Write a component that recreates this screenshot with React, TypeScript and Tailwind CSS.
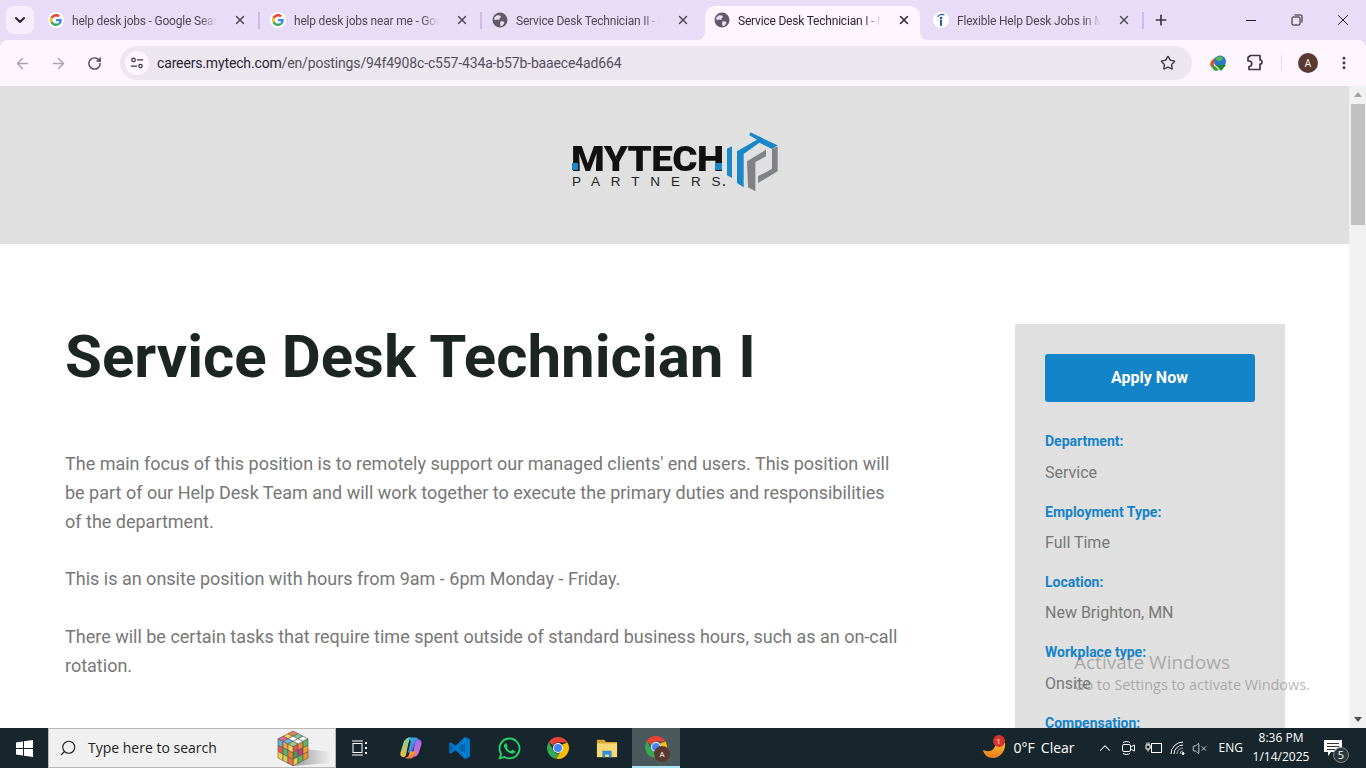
import { ArrowLeft, ArrowRight, RotateCw, Star, MoreVertical, ChevronDown, X, Plus, Search, ChevronUp, VolumeX } from 'lucide-react';
import { FaWhatsapp } from 'react-icons/fa';

const tabs = [
  { title: 'help desk jobs - Google Search', icon: 'google', box: 'w-[222px] pl-[11px] pr-[12px]', sep: true },
  { title: 'help desk jobs near me - Google', icon: 'google', box: 'w-[222px] pl-[11px] pr-[12px]', sep: true },
  { title: 'Service Desk Technician II - MyTech', icon: 'globe', box: 'w-[222px] pl-[11px] pr-[13px]' },
  { title: 'Service Desk Technician I - MyTech', icon: 'globe', box: 'w-[215px] ml-[2px] pl-[9px] pr-[9px]', active: true },
  { title: 'Flexible Help Desk Jobs in Minnesota', icon: 'indeed', box: 'w-[223px] pl-[13px] pr-[12px]', sep: true },
];

const details = [
  { label: 'Department:', value: 'Service' },
  { label: 'Employment Type:', value: 'Full Time' },
  { label: 'Location:', value: 'New Brighton, MN' },
  { label: 'Workplace type:', value: 'Onsite' },
  { label: 'Compensation:', value: '' },
];

function GoogleIcon() {
  return (
    <svg viewBox="0 0 48 48" className="w-4 h-4 shrink-0">
      <circle cx="24" cy="24" r="24" fill="#fff" />
      <g transform="translate(6 6) scale(0.75)">
        <path fill="#EA4335" d="M24 9.5c3.54 0 6.71 1.22 9.21 3.6l6.85-6.85C35.9 2.38 30.47 0 24 0 14.62 0 6.51 5.38 2.56 13.22l7.98 6.19C12.43 13.72 17.74 9.5 24 9.5z" />
        <path fill="#4285F4" d="M46.98 24.55c0-1.57-.15-3.09-.38-4.55H24v9.02h12.94c-.58 2.96-2.26 5.48-4.78 7.18l7.73 6c4.51-4.18 7.09-10.36 7.09-17.65z" />
        <path fill="#FBBC05" d="M10.53 28.59c-.48-1.45-.76-2.99-.76-4.59s.27-3.14.76-4.59l-7.98-6.19C.92 16.46 0 20.12 0 24c0 3.88.92 7.54 2.56 10.78l7.97-6.19z" />
        <path fill="#34A853" d="M24 48c6.48 0 11.93-2.13 15.89-5.81l-7.73-6c-2.15 1.45-4.92 2.3-8.16 2.3-6.26 0-11.57-4.22-13.47-9.91l-7.98 6.19C6.51 42.62 14.62 48 24 48z" />
      </g>
    </svg>
  );
}

function GlobeIcon() {
  return (
    <svg viewBox="0 0 16 16" className="w-4 h-4 shrink-0">
      <circle cx="8" cy="8" r="7.5" fill="#5f5a66" />
      <path fill="#e9dcf6" d="M2.200 5.500 5 3.200l3.200.2.8 1.600-1.600 1.400L7.500 8 5 7.600 2.600 8.200z" />
      <path fill="#e9dcf6" d="M8.500 9.200l3 .2 1 1.400-1.700 2.600-2.100.8-.6-2.200z" />
    </svg>
  );
}

function IndeedIcon() {
  return (
    <svg viewBox="0 0 16 16" className="w-4 h-4 shrink-0">
      <circle cx="8" cy="8" r="8" fill="#fff" />
      <path d="M4.500 5C6 2.800 9 2 11.500 3" fill="none" stroke="#2557a7" strokeWidth="1.200" />
      <circle cx="8" cy="6" r="1.300" fill="#2557a7" />
      <rect x="7" y="7.800" width="2" height="6" fill="#2557a7" />
    </svg>
  );
}

function ChromeIcon({ size = 24 }: { size?: number }) {
  return (
    <svg viewBox="0 0 48 48" width={size} height={size} className="shrink-0">
      <path fill="#EA4335" d="M24 2a22 22 0 0 1 19 11H24a11 11 0 0 0-10 6.500L5.600 12A22 22 0 0 1 24 2z" />
      <path fill="#34A853" d="M5.600 12 15 28.500A11 11 0 0 0 27 34.600L20.600 45.700A22 22 0 0 1 5.600 12z" />
      <path fill="#FBBC04" d="M43 13A22 22 0 0 1 20.600 45.700L30 29.500A11 11 0 0 0 32 17z" />
      <circle cx="24" cy="24" r="10" fill="#fff" />
      <circle cx="24" cy="24" r="8" fill="#4285F4" />
    </svg>
  );
}

function WindowsLogo() {
  return (
    <svg viewBox="0 0 17 17" className="w-[17px] h-[17px]">
      <path fill="#fff" d="M0 2.400 7 1.400V8H0zM8 1.300 17 0v8H8zM0 9h7v6.600l-7-1zM8 9h9v8l-9-1.300z" />
    </svg>
  );
}

function RubikCube() {
  const top = ['#e8805a', '#7fc8a0', '#fff', '#f5d04a', '#fff', '#fff', '#e86a8a', '#6fb0e8', '#9fd07a'];
  const left = ['#5fb0d8', '#f0a040', '#f5d04a', '#e85a4a', '#58b868', '#f08030', '#f5d04a', '#d8d04a', '#e87040'];
  const right = ['#e84a6a', '#f08a30', '#58b868', '#4a9a50', '#c83a7a', '#f0a030', '#e8d040', '#58b868', '#f09030'];
  const cells: React.ReactNode[] = [];
  for (let r = 0; r < 3; r++) {
    for (let c = 0; c < 3; c++) {
      const i = r * 3 + c;
      const tx = 16 + (c - r) * 5;
      const ty = 2 + (c + r) * 2.6;
      cells.push(<polygon key={'t' + i} fill={top[i]} stroke="#555" strokeWidth="0.6" points={`${tx},${ty} ${tx + 5},${ty + 2.6} ${tx},${ty + 5.2} ${tx - 5},${ty + 2.6}`} />);
      const lx = 1 + c * 5;
      const ly = 9.8 + c * 2.6 + r * 6.4;
      cells.push(<polygon key={'l' + i} fill={left[i]} stroke="#555" strokeWidth="0.6" points={`${lx},${ly} ${lx + 5},${ly + 2.6} ${lx + 5},${ly + 9} ${lx},${ly + 6.4}`} />);
      const rx = 16 + c * 5;
      const ry = 17.6 - c * 2.6 + r * 6.4;
      cells.push(<polygon key={'r' + i} fill={right[i]} stroke="#555" strokeWidth="0.6" points={`${rx},${ry} ${rx + 5},${ry - 2.6} ${rx + 5},${ry + 3.8} ${rx},${ry + 6.4}`} />);
    }
  }
  return (
    <svg viewBox="0 0 56 38" className="w-[56px] h-[38px]">
      <defs>
        <linearGradient id="cubeShadow" x1="0" x2="1" y1="0" y2="0">
          <stop offset="0" stopColor="#9a9a9a" />
          <stop offset="1" stopColor="#f0f0f0" />
        </linearGradient>
      </defs>
      <polygon points="28,20 54,23 54,34 16,37" fill="url(#cubeShadow)" />
      {cells}
    </svg>
  );
}

function MytechLogo() {
  return (
    <div className="relative w-[230px] h-[75px]">
      <div className="absolute left-[11px] top-[13px] text-[35px] leading-[44px] font-black text-[#111] tracking-[-0.5px] scale-x-[1.1] origin-left font-['Roboto',sans-serif]">MYTECH</div>
      <div className="absolute left-[12px] top-[38px] w-[6px] h-[7px] bg-[#1a87c9]" />
      <div className="absolute left-[155px] top-[38px] w-[7px] h-[7px] bg-[#1a87c9]" />
      <div className="absolute left-[12px] top-[49px] text-[13.5px] leading-[16px] text-[#222] tracking-[10.9px] font-['Liberation_Sans',sans-serif]">PARTNERS</div>
      <div className="absolute left-[163px] top-[59px] w-[2px] h-[2px] rounded-full bg-[#222]" />
      <svg viewBox="0 0 186 204" className="absolute left-[162px] top-[3px] w-[62px] h-[68px]">
        <polygon fill="#1a87c9" points="15,62 30,55 30,150 15,142" />
        <polygon fill="#1a87c9" points="45,70 65,60 65,178 45,165" />
        <polygon fill="#1a87c9" points="45,70 105,35 82,22 85,13 167,52 150,63 112,44 65,78" />
        <polygon fill="#808285" points="167,55 167,130 108,165 108,145 150,122 150,63" />
        <polygon fill="#808285" points="75,100 132,65 132,85 100,102 100,190 78,178" />
      </svg>
    </div>
  );
}

export default function App() {
  return (
    <div className="w-[1366px] h-[768px] overflow-hidden flex flex-col bg-[#e9dcf6] font-['Roboto',sans-serif]">
      {/* tab strip */}
      <div className="h-10 flex items-end shrink-0">
        <div className="w-[28px] h-[28px] ml-[6px] mb-[6px] mr-[3px] rounded-lg bg-[#f6eefc] flex items-center justify-center shrink-0">
          <ChevronDown size={16} strokeWidth={3} className="text-[#2a2530]" />
        </div>
        {tabs.map((tab) => (
          <div key={tab.title} className={`${tab.box} h-[34px] pb-[6px] relative flex items-center gap-2 shrink-0 rounded-t-[10px] ${tab.active ? 'bg-[#fdf5ff] text-[#2c2730]' : 'text-[#4d4855]'}`}>
            {tab.icon === 'google' && <GoogleIcon />}
            {tab.icon === 'globe' && <GlobeIcon />}
            {tab.icon === 'indeed' && <IndeedIcon />}
            <span className="flex-1 overflow-hidden whitespace-nowrap text-xs tracking-[-0.2px] pt-px [mask-image:linear-gradient(to_right,black_88%,transparent)]">{tab.title}</span>
            <X size={14} strokeWidth={2.5} className="ml-2 shrink-0" />
            {tab.sep && <div className="absolute right-[-1px] top-[6px] w-[2px] h-[17px] bg-[#cdb8f0]" />}
            {tab.active && (
              <>
                <div className="absolute left-[-8px] bottom-0 w-2 h-2 bg-[#fdf5ff]"><div className="w-2 h-2 rounded-br-lg bg-[#e9dcf6]" /></div>
                <div className="absolute right-[-8px] bottom-0 w-2 h-2 bg-[#fdf5ff]"><div className="w-2 h-2 rounded-bl-lg bg-[#e9dcf6]" /></div>
              </>
            )}
          </div>
        ))}
        <div className="w-[36px] h-[34px] pb-[6px] flex items-center justify-center shrink-0">
          <Plus size={16} strokeWidth={2.5} className="text-[#3a3540]" />
        </div>
        <div className="ml-auto h-10 flex items-center text-[#1c1c1c] shrink-0">
          <div className="w-[46px] flex justify-center"><div className="w-[10px] h-px bg-[#1c1c1c]" /></div>
          <div className="w-[46px] flex justify-center">
            <svg viewBox="0 0 12 12" className="w-3 h-3" fill="none" stroke="currentColor"><rect x="1" y="3" width="8" height="8" rx="1" /><path d="M3.500 1h6.500a1 1 0 0 1 1 1v6.500" /></svg>
          </div>
          <div className="w-[46px] flex justify-center"><X size={18} strokeWidth={1.3} /></div>
        </div>
      </div>

      {/* toolbar */}
      <div className="h-[46px] bg-[#fdf5ff] rounded-t-lg flex items-center shrink-0 pl-[4px]">
        <div className="w-[36px] flex justify-center shrink-0"><ArrowLeft size={17} className="text-[#a8a3ad]" /></div>
        <div className="w-[36px] flex justify-center shrink-0"><ArrowRight size={17} className="text-[#a8a3ad]" /></div>
        <div className="w-[36px] flex justify-center shrink-0"><RotateCw size={15} strokeWidth={2.2} className="text-[#46414c]" /></div>
        <div className="w-[1072px] ml-[8px] h-[34px] rounded-full bg-[#ece6f0] flex items-center pl-[5px] pr-[16px] shrink-0">
          <div className="w-[24px] h-[24px] rounded-full bg-[#fdf5ff] flex items-center justify-center shrink-0">
            <svg viewBox="0 0 16 16" className="w-[14px] h-[14px]" fill="none" stroke="#3c3744" strokeWidth="1.4"><circle cx="4" cy="4.500" r="2" /><path d="M8 4.500h7M1 11.500h7" /><circle cx="12" cy="11.500" r="2" /></svg>
          </div>
          <span className="ml-2 text-sm tracking-[-0.15px] text-[#2a2530] whitespace-nowrap">careers.mytech.com<span className="text-[#55505c]">/en/postings/94f4908c-c557-434a-b57b-baaece4ad664</span></span>
          <Star size={16} strokeWidth={2} className="ml-auto text-[#3c3744]" />
        </div>
        <svg viewBox="0 0 18 18" className="w-[18px] h-[18px] ml-[17px] shrink-0">
          <path d="M1 11a8 8 0 0 1 5-7l2 3a4 4 0 0 0-3 5l-2 2z" fill="#e0582a" />
          <path d="M3 13.500a8 8 0 0 1 1-2.500l3 2 3 3-3 1a6 6 0 0 1-4-3.500z" fill="#3f9b3a" />
          <circle cx="11" cy="7.500" r="6" fill="#2a78c8" />
          <path d="M7 4c2-2 6-2 7 0l-2 3-4-.5z" fill="#5fb84a" />
          <path d="M7 11h10l-5 6z" fill="#1f8a24" />
        </svg>
        <svg viewBox="0 0 18 18" className="w-[18px] h-[18px] ml-[19px] shrink-0" fill="none" stroke="#3c3744" strokeWidth="1.7" strokeLinejoin="round">
          <path d="M2 3.500l2.500-2h9.500v4.500a2 2 0 0 1 0 4v5.500H3v-3a2 2 0 0 0 0-5.500H2z" />
        </svg>
        <div className="w-px h-[16px] ml-[17px] bg-[#e3d6f2] shrink-0" />
        <div className="w-[20px] h-[20px] ml-[16px] rounded-full bg-[#5a3a30] text-white text-[10px] flex items-center justify-center font-['Open_Sans',sans-serif] shrink-0">A</div>
        <MoreVertical size={16} strokeWidth={2.4} className="ml-[18px] text-[#3c3744] shrink-0" />
      </div>

      {/* viewport */}
      <div className="flex-1 min-h-0 flex relative bg-white">
        <div className="flex-1 min-w-0 overflow-hidden">
          <div className="h-[158px] bg-[#e0e0e0] flex items-center justify-center pb-[5px] pl-px">
            <MytechLogo />
          </div>
          <div className="flex items-start pt-20 pl-[65px]">
            <div className="w-[840px] shrink-0">
              <h1 className="text-[60px] leading-[66px] font-bold text-[#1b2521]">Service Desk Technician I</h1>
              <div className="mt-[59px] text-lg leading-[29px] text-[#777] flex flex-col gap-[28px]">
                <p>The main focus of this position is to remotely support our managed clients' end users. This position will be part of our Help Desk Team and will work together to execute the primary duties and responsibilities of the department.</p>
                <p>This is an onsite position with hours from 9am - 6pm Monday - Friday.</p>
                <p className="mt-px">There will be certain tasks that require time spent outside of standard business hours, such as an on-call rotation.</p>
              </div>
            </div>
            <div className="w-[270px] ml-[110px] shrink-0 bg-[#e0e0e0] p-[30px] h-[500px]">
              <div className="h-12 rounded-[3px] bg-[#1484c8] text-white font-bold text-base flex items-center justify-center pr-px">Apply Now</div>
              <div className="mt-[28.2px] flex flex-col gap-[16px]">
                {details.map((d) => (
                  <div key={d.label}>
                    <div className="text-sm leading-[22px] font-bold text-[#1583c9]">{d.label}</div>
                    <div className="mt-[8.4px] text-base leading-[24px] text-[#777]">{d.value}</div>
                  </div>
                ))}
              </div>
            </div>
          </div>
        </div>
        {/* scrollbar */}
        <div className="w-[17px] bg-[#f1f1f1] shrink-0 flex flex-col items-center">
          <div className="h-[17px] flex items-center justify-center"><div className="w-0 h-0 border-x-[4px] border-x-transparent border-b-[5px] border-b-[#a3a3a3]" /></div>
          <div className="w-[14px] h-[121px] bg-[#c1c1c1] mt-px" />
          <div className="mt-auto h-[17px] flex items-center justify-center"><div className="w-0 h-0 border-x-[4px] border-x-transparent border-t-[5px] border-t-[#505050]" /></div>
        </div>
        {/* watermark */}
        <div className="absolute left-[1074px] top-[562px] text-[#6f6f6f]/50 font-['Open_Sans',sans-serif] pointer-events-none">
          <div className="text-[19px] leading-[28px]">Activate Windows</div>
          <div className="text-[14.4px] leading-[20px] -mt-px">Go to Settings to activate Windows.</div>
        </div>
      </div>

      {/* taskbar */}
      <div className="h-10 bg-[#17262c] flex items-center shrink-0 text-white font-['Open_Sans',sans-serif] pr-[11px]">
        <div className="w-[48px] flex justify-center shrink-0"><WindowsLogo /></div>
        <div className="w-[288px] h-10 bg-[#f0f0f0] border border-[#b8b8b8] flex items-center pl-[10px] pr-[2px] text-[#222] shrink-0">
          <Search size={18} strokeWidth={1.5} className="-scale-x-100" />
          <span className="ml-[11px] text-sm">Type here to search</span>
          <div className="ml-auto"><RubikCube /></div>
        </div>
        <div className="flex items-center shrink-0">
          <div className="w-[48px] mr-[2px] flex justify-center">
            <svg viewBox="0 0 16 16" className="w-4 h-4" fill="none" stroke="#fff" strokeWidth="1"><rect x="1" y="3.500" width="9" height="9" /><path d="M0 1h11M0 15h11" /><path d="M13 3h2M13 8h2M13 13h2" strokeWidth="2" /></svg>
          </div>
          <div className="w-[50px] flex justify-center">
            <svg viewBox="0 0 24 24" className="w-6 h-6">
              <defs>
                <linearGradient id="copA" x1="0" x2="1" y1="0" y2="1"><stop offset="0" stopColor="#35c3d8" /><stop offset="0.6" stopColor="#3f7fe8" /><stop offset="1" stopColor="#a05cf0" /></linearGradient>
                <linearGradient id="copB" x1="0" x2="1" y1="0" y2="1"><stop offset="0" stopColor="#f5d030" /><stop offset="0.6" stopColor="#f58040" /><stop offset="1" stopColor="#f0508a" /></linearGradient>
                <linearGradient id="copC" x1="0" x2="0" y1="0" y2="1"><stop offset="0" stopColor="#6fd0a0" /><stop offset="1" stopColor="#f0c040" /></linearGradient>
                <linearGradient id="copD" x1="0" x2="0" y1="0" y2="1"><stop offset="0" stopColor="#a06cf0" /><stop offset="1" stopColor="#e070d0" /></linearGradient>
              </defs>
              <path fill="url(#copC)" d="M7 3c1-1 2-1.500 4-1.500L9 9 7 19c-.5 1.500-2 2.500-3.500 2C1.500 20.500 1 18.500 1.500 16.500l3-10C5 5 6 4 7 3z" />
              <path fill="url(#copA)" d="M9 1.500h7c1.500 0 3 .5 4 2-2 0-3.500 1-4 3l-3 10H9l2.500-10C12 5 11 3 9 1.500z" />
              <path fill="url(#copD)" d="M16 6.500c.5-2 2-3 3.500-3 2 0 3.500 2 3 4.500l-2.500 8c-.5 1.500-1.500 3-3 4.500H13.500z" />
              <path fill="url(#copB)" d="M6 21.500c2 .5 3.500-1 4-3 .5-1 .5-2 1-3h6.500L15 20c-.5 1.500-2 2.500-3.500 2.500H8c-.7 0-1.500-.3-2-1z" />
            </svg>
          </div>
          <div className="w-[48px] flex justify-center">
            <svg viewBox="0 0 24 24" className="w-6 h-6">
              <path fill="#0065a9" d="M17 1 7.500 10 3 6.500 1 7.500v9l2 1L7.500 14 17 23l5-2.400V3.400z" />
              <path fill="#007acc" d="M17 1l5 2.400v17.200L17 23V6.500L10 12l7 5.500V23L7.500 14 3 17.500l-2-1 5-4.500-5-4.500 2-1L7.500 10z" />
            </svg>
          </div>
          <div className="w-[50px] flex justify-center"><FaWhatsapp size={25} className="text-[#25d366]" /></div>
          <div className="w-[48px] flex justify-center"><ChromeIcon /></div>
          <div className="w-[50px] flex justify-center">
            <svg viewBox="0 0 24 24" className="w-[22px] h-[22px]">
              <path fill="#d9a32c" d="M1 3h8l2 2.500h12V9H1z" />
              <path fill="#f8d775" d="M1 7h22v15H1z" />
              <path fill="#2d8fd5" d="M7 15h10v7h-3v-3h-4v3H7z" />
            </svg>
          </div>
          <div className="relative w-[48px] h-10 bg-[#4b585c] border-b-2 border-[#a8e6f5] flex justify-center items-center">
            <ChromeIcon />
            <div className="absolute left-[22px] top-[18px] w-[16px] h-[16px] rounded-full bg-[#5a3a30] text-white text-[8px] flex items-center justify-center">A</div>
          </div>
        </div>
        <div className="ml-auto flex items-center shrink-0 text-[13px]">
          <div className="relative w-[24px] h-[24px] mr-[8px]">
            <svg viewBox="0 0 24 24" className="w-6 h-6">
              <defs><linearGradient id="flame" x1="0" x2="0" y1="0" y2="1"><stop offset="0" stopColor="#f8c030" /><stop offset="1" stopColor="#f07a20" /></linearGradient></defs>
              <path fill="url(#flame)" d="M1 14c4 2 9 1.500 11-2 2-3 4-6 7-6l4 1c1 8-5 15-12 15-5 0-9-3-10-8z" />
            </svg>
            <div className="absolute left-[11px] top-[-1px] w-[12px] h-[12px] rounded-full bg-[#d9342b] text-[8px] flex items-center justify-center">1</div>
          </div>
          <span className="text-sm">0°F</span>
          <span className="text-sm ml-[6px]">Clear</span>
          <ChevronUp size={18} strokeWidth={1.4} className="ml-[21px]" />
          <svg viewBox="0 0 16 16" className="w-4 h-4 ml-[7px]" fill="none" stroke="#fff" strokeWidth="1"><rect x="1.500" y="4.500" width="8" height="7" rx="1.500" /><path d="M9.500 7l4-2v6l-4-2M2 2.500c2-1.300 5-1.300 7 0M2 13.500c2 1.300 5 1.300 7 0" /></svg>
          <svg viewBox="0 0 18 16" className="w-[18px] h-4 ml-[8px]" fill="none" stroke="#fff" strokeWidth="1"><path d="M1 5h4v4H1zM2 5V2.500M4 5V2.500M3 9v2.500M5 7h2" /><rect x="6.500" y="3.500" width="10" height="9" /></svg>
          <svg viewBox="0 0 16 16" className="w-4 h-4 ml-[7px]" fill="none" stroke="#fff" strokeWidth="1"><path d="M1 14A12 12 0 0 1 13 2M4 14A9 9 0 0 1 13 5" /><path d="M7 14a6 6 0 0 1 6-6M10 14a3 3 0 0 1 3-3" opacity="0.6" /><circle cx="13" cy="13.500" r="1" fill="#fff" /></svg>
          <VolumeX size={15} strokeWidth={1.2} className="ml-[6px]" />
          <span className="text-xs ml-[12px]">ENG</span>
          <div className="w-[62px] ml-[6px] pl-[2px] pb-[2px] text-xs leading-[19px] text-center">
            <div>8:36 PM</div>
            <div>1/14/2025</div>
          </div>
          <div className="relative w-[44px] h-10 flex items-center justify-center">
            <svg viewBox="0 0 18 16" className="w-[18px] h-4"><path fill="#fff" d="M0 0h18v12H7l-3 4v-4H0z" /><path stroke="#333" d="M3 3.500h12M3 6.500h12M3 9.500h8" /></svg>
            <div className="absolute left-[22px] top-[19px] w-[16px] h-[16px] rounded-full bg-[#2a383d] border border-[#888] text-[11px] flex items-center justify-center">5</div>
          </div>
        </div>
      </div>
    </div>
  );
}
